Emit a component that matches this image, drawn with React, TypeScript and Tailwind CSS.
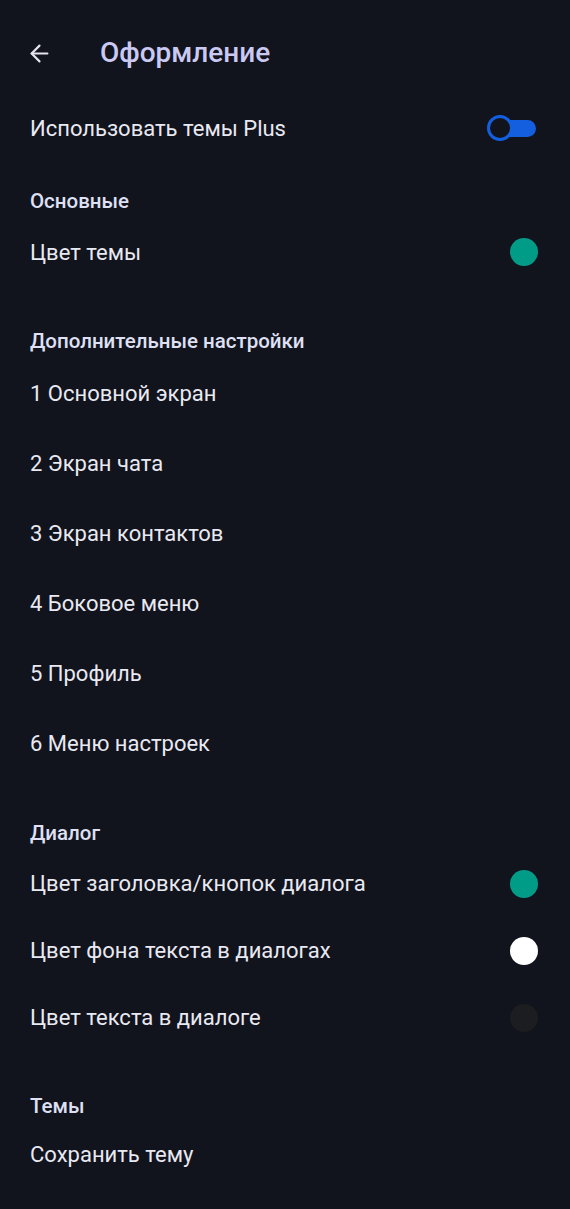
import { ArrowLeft } from "lucide-react";

type Row =
  | { kind: "header"; text: string; gap: boolean }
  | { kind: "item"; text: string; h: string; dot?: string };

const rows: Row[] = [
  { kind: "header", text: "Основные", gap: false },
  { kind: "item", text: "Цвет темы", h: "h-[68px]", dot: "bg-[#009c88]" },
  { kind: "header", text: "Дополнительные настройки", gap: true },
  { kind: "item", text: "1 Основной экран", h: "h-[70px]" },
  { kind: "item", text: "2 Экран чата", h: "h-[70px]" },
  { kind: "item", text: "3 Экран контактов", h: "h-[70px]" },
  { kind: "item", text: "4 Боковое меню", h: "h-[70px]" },
  { kind: "item", text: "5 Профиль", h: "h-[70px]" },
  { kind: "item", text: "6 Меню настроек", h: "h-[70px]" },
  { kind: "header", text: "Диалог", gap: true },
  { kind: "item", text: "Цвет заголовка/кнопок диалога", h: "h-[67px]", dot: "bg-[#009c88]" },
  { kind: "item", text: "Цвет фона текста в диалогах", h: "h-[67px]", dot: "bg-white" },
  { kind: "item", text: "Цвет текста в диалоге", h: "h-[67px]", dot: "bg-[#1c1d20]" },
  { kind: "header", text: "Темы", gap: true },
  { kind: "item", text: "Сохранить тему", h: "h-[62px]" },
];

export default function App() {
  return (
    <div className="min-h-[1209px] w-full bg-[#11131d] font-['Roboto',sans-serif] text-[#e9e9f1]">
      <header className="flex h-[106px] items-center pl-[26px]">
        <ArrowLeft size={27} strokeWidth={1.9} className="text-[#e4e4ee]" />
        <h1 className="ml-[47px] text-[28px] font-medium text-[#c9c9f2]">Оформление</h1>
      </header>

      <div className="flex h-[44px] items-center justify-between pl-[30px] pr-[34px]">
        <span className="text-[22px]">Использовать темы Plus</span>
        <div className="relative h-[17px] w-[48px] rounded-full bg-[#135fe0]">
          <span className="absolute -left-px top-1/2 h-[26px] w-[26px] -translate-y-1/2 rounded-full border-[3px] border-[#135fe0] bg-[#11131d]" />
        </div>
      </div>

      <div className="mt-[34px]">
        {rows.map((row) =>
          row.kind === "header" ? (
            <div
              key={row.text}
              className={`flex h-[34px] items-center px-[30px] text-[20.5px] font-medium text-[#dfe0f4] ${row.gap ? "mt-[38px]" : ""}`}
            >
              {row.text}
            </div>
          ) : (
            <div key={row.text} className={`flex ${row.h} items-center justify-between pl-[30px] pr-[32px]`}>
              <span className="text-[22px]">{row.text}</span>
              {row.dot && <span className={`h-[28px] w-[28px] rounded-full ${row.dot}`} />}
            </div>
          )
        )}
      </div>
    </div>
  );
}
